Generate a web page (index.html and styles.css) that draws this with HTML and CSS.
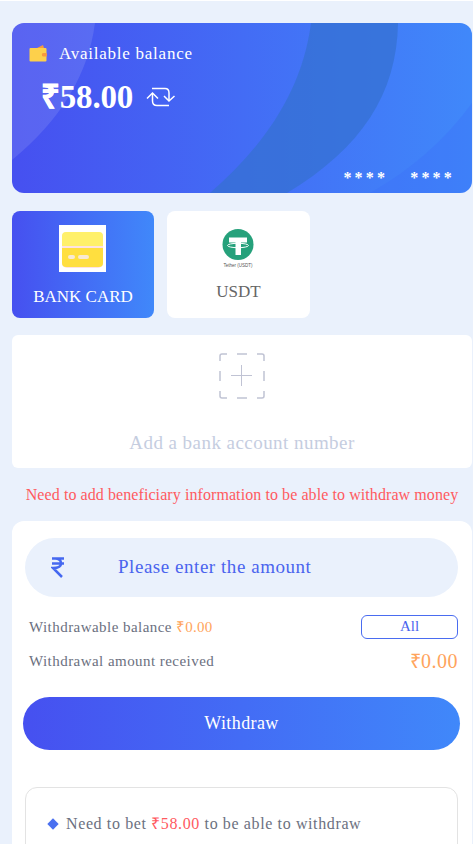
FILE: index.html
```html
<!DOCTYPE html>
<html lang="en">
<head>
<meta charset="utf-8">
<title>Withdraw</title>
<link rel="stylesheet" href="styles.css">
</head>
<body>
<main class="page">
  <section class="balance-card">
    <svg class="card-art" viewBox="0 0 460 170" preserveAspectRatio="none" aria-hidden="true">
      <path class="art-light" d="M0 0H83Q73 77 0 137Z"/>
      <path class="art-dark" d="M299 0H386C385 70 350 125 275 170H198C250 125 290 70 299 0Z"/>
      <path class="art-soft" d="M460 80V170H358Q420 135 460 80Z"/>
    </svg>
    <div class="balance-label">
      <svg class="wallet" viewBox="0 0 18 17" aria-hidden="true">
        <path fill="#f79a3e" d="M8 3 14 0l1 3Z"/>
        <rect x="0.5" y="3" width="17" height="13.5" rx="1" fill="#fdd04b"/>
        <rect x="13" y="8" width="5" height="3.5" rx="1.2" fill="#f79a3e"/>
      </svg>
      <span>Available balance</span>
    </div>
    <div class="balance-amount">
      <span><b class="bold-sign">₹</b>58.00</span>
      <svg class="refresh" viewBox="0 0 30 20" aria-hidden="true">
        <path d="M6 1.5H19Q23 1.5 23 6V13"/>
        <path d="M18 9 23 14 28.500 9"/>
        <path d="M6.500 7V14Q6.500 18.500 11 18.500H23"/>
        <path d="M1 11.500 6.500 6 12 11.500"/>
      </svg>
    </div>
    <div class="card-mask"><span>****</span><span>****</span></div>
  </section>

  <section class="tabs">
    <div class="tab tab-active">
      <svg class="tab-image" viewBox="0 0 47 47" aria-hidden="true">
        <rect width="47" height="47" fill="#fff"/>
        <rect x="3" y="7" width="41" height="36" rx="5" fill="#fde2e2"/>
        <path fill="#fff06a" d="M3 11q0-4 4-4H40q4 0 4 4V21H3Z"/>
        <path fill="#ffdf3f" d="M3 23H44V38q0 4-4 4H7q-4 0-4-4Z"/>
        <rect x="9" y="30" width="7" height="4" rx="2" fill="#f8e9d4"/>
        <rect x="19" y="30" width="11" height="4" rx="2" fill="#f8e9d4"/>
      </svg>
      <span>BANK CARD</span>
    </div>
    <div class="tab">
      <svg class="tab-image" viewBox="0 0 47 47" aria-hidden="true">
        <circle cx="23" cy="19.500" r="15.500" fill="#26a17b"/>
        <path fill="#fff" d="M14 12.500H32V17.500H26V30H20.500V17.500H14Z"/>
        <ellipse cx="23" cy="20.500" rx="10.500" ry="2.200" fill="none" stroke="#fff" stroke-width="1"/>
        <text x="23" y="41.500" class="tether-name">Tether (USDT)</text>
      </svg>
      <span>USDT</span>
    </div>
  </section>

  <section class="add-account">
    <svg class="add-icon" viewBox="0 0 46 46" aria-hidden="true">
      <path class="add-frame" d="M1 8V3Q1 1 3 1H8M18 1H28M38 1H43Q45 1 45 3V8M45 18V28M45 38V43Q45 45 43 45H38M28 45H18M8 45H3Q1 45 1 43V38M1 28V18"/>
      <path class="add-plus" d="M22.500 12V33M12 22.500H33"/>
    </svg>
    <p>Add a bank account number</p>
  </section>

  <p class="warning">Need to add beneficiary information to be able to withdraw money</p>

  <section class="panel">
    <div class="amount-input">
      <svg class="rupee" viewBox="0 0 14 21" aria-hidden="true">
        <path d="M1 1.500H13M1 6.500H13M4 1.500Q10 1.500 10 6.500Q10 11 2 11L11 20"/>
      </svg>
      <span class="amount-hint">Please enter the amount</span>
    </div>
    <div class="info-row info-balance">
      <span class="info-text">Withdrawable balance <em>₹0.00</em></span>
      <button class="all-btn" type="button">All</button>
    </div>
    <div class="info-row info-received">
      <span>Withdrawal amount received</span>
      <strong>₹0.00</strong>
    </div>
    <button class="withdraw-btn" type="button">Withdraw</button>
    <div class="notes">
      <p class="note"><i class="diamond"></i>Need to bet <em>₹58.00</em> to be able to withdraw</p>
    </div>
  </section>
</main>
</body>
</html>
```
FILE: styles.css
```css
* { box-sizing: border-box; }
html, body {
  margin: 0;
  height: 844px;
  overflow: hidden;
  background: #fff;
}
body {
  font-family: "Liberation Serif", "Times New Roman", serif;
  padding-top: 1px;
}
.page {
  background: #eaf1fc;
  padding: 22px 1px 0 12px;
  height: 843px;
}
.balance-card {
  position: relative;
  height: 170px;
  border-radius: 12px;
  overflow: hidden;
  color: #fff;
  background: linear-gradient(90deg, #4650f0, #4088fa);
  padding: 22px 17px 0;
}
.card-art {
  position: absolute;
  inset: 0;
  width: 100%;
  height: 100%;
}
.art-light { fill: rgba(255, 255, 255, .11); }
.art-dark { fill: rgba(52, 112, 208, .7); }
.art-soft { fill: rgba(60, 110, 250, .3); }
.balance-label, .balance-amount, .card-mask { position: relative; }
.balance-label {
  display: flex;
  align-items: center;
  gap: 12px;
  font-size: 17px;
  letter-spacing: .75px;
  line-height: 17px;
}
.wallet { width: 18px; height: 17px; display: block; }
.balance-amount {
  display: flex;
  align-items: center;
  gap: 13px;
  margin: 16px 0 0 12px;
  font-size: 33px;
  font-weight: 700;
  line-height: 38px;
  letter-spacing: -.2px;
}
.bold-sign {
  -webkit-text-stroke: .6px #fff;
}
.refresh {
  width: 30px;
  height: 20px;
  fill: none;
  stroke: #fff;
  stroke-width: 1.500;
}
.card-mask {
  position: absolute;
  right: 0;
  bottom: 0;
  display: flex;
  gap: 22px;
  padding: 0 17px 6px 0;
  font-size: 16px;
  letter-spacing: 3.200px;
  font-weight: 700;
  line-height: 18px;
}
.tabs {
  display: flex;
  gap: 13px;
  margin-top: 18px;
}
.tab {
  width: 143px;
  height: 107px;
  border-radius: 8px;
  background: #fff;
  color: #666;
  font-size: 17px;
  display: flex;
  flex-direction: column;
  align-items: center;
  padding-top: 14px;
}
.tab span { margin-top: 10px; line-height: 20px; }
.tab-active {
  width: 142px;
  color: #fff;
  background: linear-gradient(90deg, #4650f0, #4088fa);
}
.tab-active span { margin-top: 15px; }
.tab-active .tab-image { margin-left: -1px; }
.tab-image { width: 47px; height: 47px; display: block; }
.tether-name {
  font-family: "Liberation Sans", Arial, sans-serif;
  font-size: 4.500px;
  fill: #555;
  text-anchor: middle;
}
.add-account {
  margin-top: 17px;
  height: 133px;
  background: #fff;
  border-radius: 6px;
  display: flex;
  flex-direction: column;
  align-items: center;
  padding-top: 18px;
}
.add-icon { width: 46px; height: 46px; display: block; }
.add-frame { fill: none; stroke: #c0c3d4; stroke-width: 1.500; }
.add-plus { fill: none; stroke: #c0c3d4; stroke-width: 1; }
.add-account p {
  margin: 33px 0 0;
  font-size: 19px;
  line-height: 22px;
  color: #c5cddf;
  letter-spacing: .45px;
}
.warning {
  margin: 18px 0 0;
  text-align: center;
  color: #ff5a5f;
  font-size: 16px;
  line-height: 18px;
  letter-spacing: .08px;
}
.panel {
  margin-top: 17px;
  height: 323px;
  overflow: hidden;
  background: #fff;
  border-radius: 12px 12px 0 0;
  padding: 17px 14px 0 13px;
}
.amount-input {
  display: flex;
  align-items: center;
  height: 59px;
  border-radius: 30px;
  background: #eaf1fc;
  padding-left: 26px;
  color: #4a64ee;
  font-size: 19px;
  letter-spacing: .54px;
}
.amount-hint { margin-bottom: 2px; }
.rupee {
  width: 14px;
  height: 21px;
  margin-right: 53px;
  fill: none;
  stroke: #4568f0;
  stroke-width: 2.500;
}
.info-row {
  display: flex;
  justify-content: space-between;
  align-items: center;
  padding-left: 4px;
  color: #6b7080;
  font-size: 15px;
  letter-spacing: .45px;
}
.info-row em { font-style: normal; color: #ffa45c; letter-spacing: .2px; }
.info-text { margin-bottom: 2px; }
.info-balance { margin-top: 18px; height: 24px; }
.info-received { margin-top: 10px; height: 24px; }
.info-received strong {
  font-weight: 400;
  font-size: 20px;
  color: #ffa45c;
  letter-spacing: .5px;
  margin-top: -1px;
}
.all-btn {
  width: 97px;
  height: 24px;
  padding: 0 0 2px;
  border: 1px solid #4a6cf0;
  border-radius: 6px;
  background: #fff;
  color: #4a64ee;
  font: inherit;
}
.withdraw-btn {
  display: block;
  width: 437px;
  height: 53px;
  margin: 24px 0 0 -2px;
  border: 0;
  border-radius: 27px;
  color: #fff;
  background: linear-gradient(90deg, #4650f0, #4088fa);
  font-family: inherit;
  font-size: 18px;
  letter-spacing: .4px;
}
.notes {
  margin-top: 37px;
  height: 120px;
  border: 1px solid #e3e3e3;
  border-radius: 12px;
  padding: 26px 21px 0;
}
.note {
  display: flex;
  align-items: center;
  margin: 0;
  color: #6b7080;
  font-size: 16px;
  line-height: 20px;
  letter-spacing: .62px;
  white-space: pre-wrap;
}
.note em { font-style: normal; color: #ff5a5f; }
.diamond {
  width: 8px;
  height: 8px;
  margin: 0 9px 0 2px;
  background: #4a70f0;
  transform: rotate(45deg);
}
```
